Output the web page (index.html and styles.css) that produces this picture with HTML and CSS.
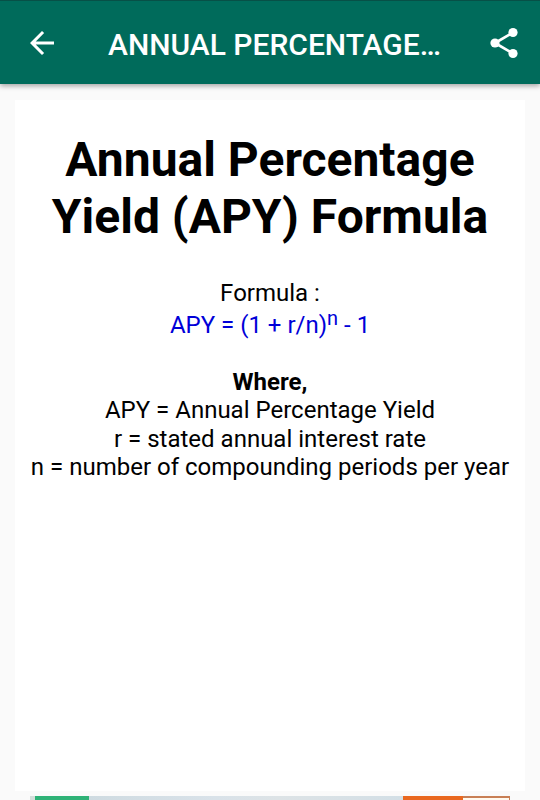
FILE: index.html
```html
<!DOCTYPE html>
<html lang="en">
<head>
    <meta charset="UTF-8">
    <meta name="viewport" content="width=device-width, initial-scale=1.0">
    <title>Annual Percentage Yield</title>
    <link rel="stylesheet" href="styles.css">
</head>
<body>
    <header class="toolbar">
        <svg class="back" viewBox="0 0 24 24" width="36" height="36">
            <path d="M20 11H7.83l5.59-5.59L12 4l-8 8 8 8 1.41-1.41L7.83 13H20v-2z"/>
        </svg>
        <div class="title">ANNUAL PERCENTAGE…</div>
        <svg class="share" viewBox="0 0 36 36" width="36" height="36">
            <path d="M27 7.5L9 18l18 10.5"/>
            <circle cx="27" cy="7.5" r="4.6"/>
            <circle cx="9" cy="18" r="4.6"/>
            <circle cx="27" cy="28.5" r="4.6"/>
        </svg>
    </header>

    <main class="card">
        <h1>Annual Percentage<br>Yield (APY) Formula</h1>
        <p class="formula">
            <span class="line">Formula :</span>
            <span class="line equation">APY = (1 + r/n)<sup>n</sup> - 1</span>
        </p>
        <p class="where">
            <b class="line">Where,</b>
            <span class="line">APY = Annual Percentage Yield</span>
            <span class="line">r = stated annual interest rate</span>
            <span class="line">n = number of compounding periods per year</span>
        </p>
    </main>

    <!-- Ad banner -->
    <div class="banner">
        <div class="banner-green"></div>
        <div class="banner-photo"></div>
        <div class="banner-orange"></div>
        <div class="banner-box"></div>
    </div>
</body>
</html>
```

FILE: styles.css
```css
body {
    margin: 0;
    height: 800px;
    overflow: hidden;
    background-color: #fafafa;
    font-family: Roboto, sans-serif;
    color: #000;
}
.toolbar {
    box-sizing: border-box;
    height: 84px;
    display: flex;
    align-items: center;
    padding: 0 18px 0 24px;
    background-color: #006b5b;
    border-top: 1px solid #075047;
    box-shadow: 0 2px 5px rgba(0, 0, 0, 0.35);
    color: #fff;
}
.back {
    fill: #fff;
}
.title {
    flex-grow: 1;
    margin-left: 48px;
    padding-top: 3px;
    font-size: 30px;
    font-weight: 500;
    white-space: nowrap;
}
.share {
    fill: #fff;
}
.share path {
    fill: none;
    stroke: #fff;
    stroke-width: 2.8;
}
.card {
    box-sizing: border-box;
    height: 691px;
    margin: 16px 15px 0;
    padding-top: 31px;
    background-color: #fff;
    text-align: center;
}
h1 {
    margin: 0;
    font-size: 48px;
    line-height: 57px;
    font-weight: bold;
}
p {
    margin: 0;
    font-size: 24px;
    line-height: 28.5px;
}
.line {
    display: block;
    white-space: nowrap;
}
.formula {
    margin-top: 34px;
}
.equation {
    margin-top: 3px;
    color: #0000d8;
}
sup {
    font-size: 20px;
    line-height: 0;
    vertical-align: 8px;
}
.where {
    margin-top: 28.5px;
}
/* only the top edge of the ad is on screen */
.banner {
    display: flex;
    height: 4px;
    margin: 5px 30px 0;
    border-left: 5px solid #d5dedb;
}
.banner-green {
    width: 54px;
    background-color: #2fb277;
}
.banner-photo {
    flex-grow: 1;
    background: linear-gradient(90deg, #cfdbe1, #d9e2e9 40%, #dde3e6 60%, #d3dfe6);
}
.banner-orange {
    width: 60px;
    background-color: #e9681f;
}
.banner-box {
    box-sizing: border-box;
    width: 47px;
    background-color: #fffaf0;
    border: 1px solid #c87f55;
    border-width: 2px 1px 0 0;
}
```
